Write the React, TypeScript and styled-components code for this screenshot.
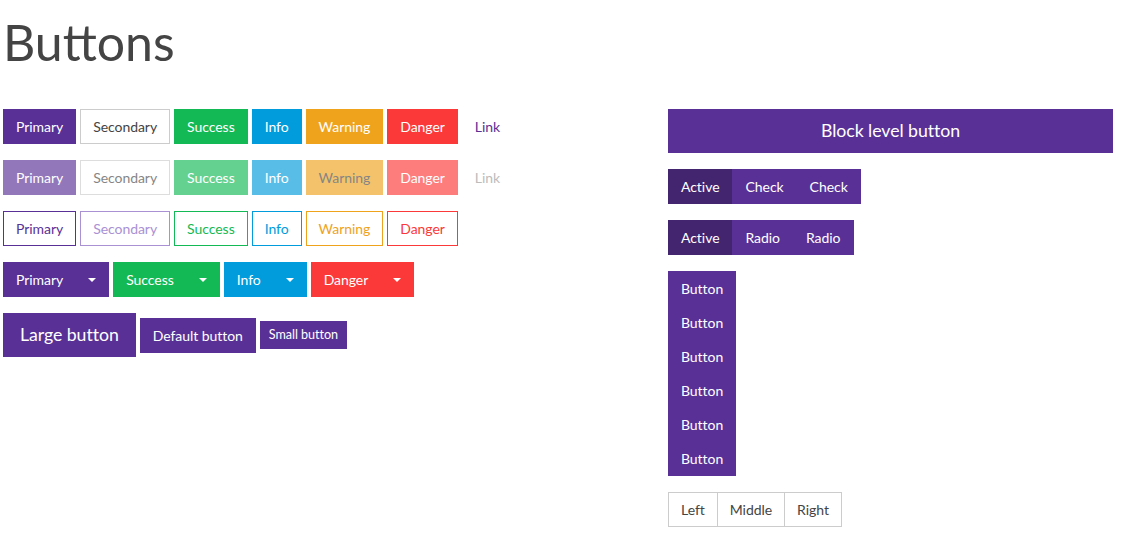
import React from "react";
import styled, { createGlobalStyle, css } from "styled-components";

type Variant = "primary" | "secondary" | "success" | "info" | "warning" | "danger" | "link";
type Size = "sm" | "md" | "lg";

const colors: Record<Variant, { bg: string; border: string; text: string; outline: string }> = {
  primary: { bg: "#593196", border: "#593196", text: "#fff", outline: "#593196" },
  secondary: { bg: "#fff", border: "#cccccc", text: "#444", outline: "#a991d4" },
  success: { bg: "#13b955", border: "#13b955", text: "#fff", outline: "#13b955" },
  info: { bg: "#009cdc", border: "#009cdc", text: "#fff", outline: "#009cdc" },
  warning: { bg: "#efa31d", border: "#efa31d", text: "#fff", outline: "#efa31d" },
  danger: { bg: "#fc3939", border: "#fc3939", text: "#fff", outline: "#fc3939" },
  link: { bg: "transparent", border: "transparent", text: "#593196", outline: "#593196" },
};

const sizes: Record<Size, string> = {
  sm: "padding: 4px 8px; font-size: 12.6px; line-height: 18.4px;",
  md: "padding: 6px 12px; font-size: 14px; line-height: 21px;",
  lg: "padding: 8px 16px; font-size: 17.7px; line-height: 26px;",
};

const GlobalStyle = createGlobalStyle`
  body {
    margin: 0;
    background: #fff;
    color: #444;
    font-family: Lato, "Liberation Sans", sans-serif;
  }
`;

const Page = styled.div`
  padding: 0 0 0 3px;
`;

const Title = styled.h1`
  margin: 0;
  padding-top: 12px;
  height: 109px;
  box-sizing: border-box;
  font-size: 50px;
  font-weight: 400;
  line-height: 1.2;
  color: #444;
`;

const Columns = styled.div`
  display: grid;
  grid-template-columns: 665px 445px;
`;

const Column = styled.div`
  display: flex;
  flex-direction: column;
  align-items: flex-start;
`;

const ButtonRow = styled.div`
  display: flex;
  align-items: center;
  gap: 4px;
  margin-bottom: 16px;
`;

const Btn = styled.button<{
  $variant: Variant;
  $outline?: boolean;
  $size?: Size;
  $active?: boolean;
}>`
  box-sizing: border-box;
  display: inline-flex;
  align-items: center;
  justify-content: center;
  border: 1px solid ${(p) => colors[p.$variant].border};
  border-radius: 0;
  font-family: inherit;
  font-weight: 400;
  letter-spacing: -0.05px;
  cursor: pointer;
  white-space: nowrap;
  background: ${(p) => (p.$outline ? "transparent" : colors[p.$variant].bg)};
  color: ${(p) => (p.$outline ? colors[p.$variant].outline : colors[p.$variant].text)};
  ${(p) => sizes[p.$size ?? "md"]}
  ${(p) =>
    p.$outline &&
    css`
      border-color: ${colors[p.$variant].outline};
    `}
  ${(p) =>
    p.$active &&
    css`
      background: #42246f;
      border-color: #42246f;
    `}
  &:disabled {
    opacity: 0.65;
    cursor: default;
    ${(p) => p.$variant === "warning" && "color: #444;"}
    ${(p) => p.$variant === "link" && "color: #999; opacity: 0.65;"}
  }
`;

const Caret = styled.span`
  display: inline-block;
  margin-left: 25px;
  width: 0;
  height: 0;
  border-top: 4.2px solid currentColor;
  border-left: 4.2px solid transparent;
  border-right: 4.2px solid transparent;
`;

const BlockButton = styled(Btn)`
  width: 100%;
  margin-bottom: 16px;
`;

const Group = styled.div<{ $bordered?: boolean }>`
  display: inline-flex;
  margin-bottom: 16px;
  & > button + button {
    margin-left: ${(p) => (p.$bordered ? "-1px" : "0")};
  }
`;

const VerticalGroup = styled.div`
  display: inline-flex;
  flex-direction: column;
  margin-bottom: 16px;
  & > button + button {
    margin-top: -1px;
  }
`;

const variants: Variant[] = ["primary", "secondary", "success", "info", "warning", "danger"];
const label = (v: Variant) => v.charAt(0).toUpperCase() + v.slice(1);

export default function App() {
  return (
    <Page>
      <GlobalStyle />
      <Title>Buttons</Title>
      <Columns>
        <Column>
          <ButtonRow>
            {variants.map((v) => (
              <Btn key={v} $variant={v}>
                {label(v)}
              </Btn>
            ))}
            <Btn $variant="link">Link</Btn>
          </ButtonRow>
          <ButtonRow>
            {variants.map((v) => (
              <Btn key={v} $variant={v} disabled>
                {label(v)}
              </Btn>
            ))}
            <Btn $variant="link" disabled>
              Link
            </Btn>
          </ButtonRow>
          <ButtonRow>
            {variants.map((v) => (
              <Btn key={v} $variant={v} $outline>
                {label(v)}
              </Btn>
            ))}
          </ButtonRow>
          <ButtonRow>
            {(["primary", "success", "info", "danger"] as Variant[]).map((v) => (
              <Btn key={v} $variant={v}>
                {label(v)}
                <Caret />
              </Btn>
            ))}
          </ButtonRow>
          <ButtonRow>
            <Btn $variant="primary" $size="lg">
              Large button
            </Btn>
            <Btn $variant="primary">Default button</Btn>
            <Btn $variant="primary" $size="sm">
              Small button
            </Btn>
          </ButtonRow>
        </Column>
        <Column>
          <BlockButton $variant="primary" $size="lg">
            Block level button
          </BlockButton>
          <Group>
            <Btn $variant="primary" $active>
              Active
            </Btn>
            <Btn $variant="primary">Check</Btn>
            <Btn $variant="primary">Check</Btn>
          </Group>
          <Group>
            <Btn $variant="primary" $active>
              Active
            </Btn>
            <Btn $variant="primary">Radio</Btn>
            <Btn $variant="primary">Radio</Btn>
          </Group>
          <VerticalGroup>
            {Array.from({ length: 6 }).map((_, i) => (
              <Btn key={i} $variant="primary">
                Button
              </Btn>
            ))}
          </VerticalGroup>
          <Group $bordered>
            <Btn $variant="secondary">Left</Btn>
            <Btn $variant="secondary">Middle</Btn>
            <Btn $variant="secondary">Right</Btn>
          </Group>
        </Column>
      </Columns>
    </Page>
  );
}
